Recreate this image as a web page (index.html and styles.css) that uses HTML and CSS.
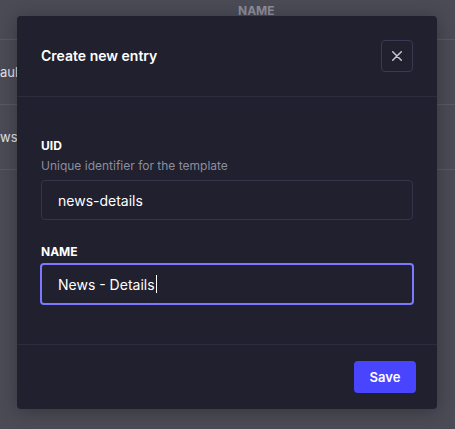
FILE: index.html
```html
<!DOCTYPE html>
<html lang="en">
<head>
<meta charset="utf-8">
<title>Create new entry</title>
<link rel="stylesheet" href="styles.css">
</head>
<body>
<div class="page">
  <div class="table">
    <div class="thead"><span class="th">NAME</span></div>
    <div class="row"><span class="cell">aul</span></div>
    <div class="row"><span class="cell cell-2">ws</span></div>
    <div class="row row-last"></div>
  </div>
</div>

<div class="modal" role="dialog" aria-labelledby="modal-title">
  <div class="modal-header">
    <h2 id="modal-title" class="modal-title">Create new entry</h2>
    <button class="close-btn" type="button" aria-label="Close">
      <svg width="10" height="10" viewBox="0 0 10 10" fill="none" aria-hidden="true">
        <path d="M0.7 0.7L9.3 9.3M9.3 0.7L0.7 9.3" stroke="#c4c4d2" stroke-width="1.5" stroke-linecap="round"/>
      </svg>
    </button>
  </div>
  <div class="modal-body">
    <div class="field">
      <label class="label" for="uid">UID</label>
      <p class="hint">Unique identifier for the template</p>
      <input id="uid" class="input" type="text" value="news-details">
    </div>
    <div class="field">
      <label class="label" for="name">NAME</label>
      <div id="name" class="input input-focus"><span>News - Details</span><span class="caret"></span></div>
    </div>
  </div>
  <div class="modal-footer">
    <button class="save-btn" type="button">Save</button>
  </div>
</div>
</body>
</html>
```
FILE: styles.css
```css
* { box-sizing: border-box; }

html, body {
  margin: 0;
  padding: 0;
}

body {
  width: 455px;
  height: 429px;
  overflow: hidden;
  background: #4b4b56;
  font-family: Inter, "Noto Sans", "Liberation Sans", sans-serif;
  position: relative;
}

.page {
  height: 100%;
}

.table {
  display: flex;
  flex-direction: column;
}

.thead {
  height: 39px;
  display: flex;
  align-items: flex-start;
  padding-left: 238px;
  padding-top: 4px;
}

.th {
  font-size: 12px;
  line-height: 14px;
  font-weight: 700;
  color: #8e8e9c;
}

.row {
  height: 65px;
  border-top: 1px solid #5a5a66;
  display: flex;
  align-items: center;
}

.row-last {
  height: 1px;
}

.cell {
  font-size: 13px;
  color: #e4e4ea;
}

.modal {
  position: absolute;
  left: 17px;
  top: 16px;
  width: 420px;
  height: 393px;
  background: #20202e;
  border-radius: 4px;
  box-shadow: 0 2px 18px rgba(0, 0, 0, 0.3);
  display: flex;
  flex-direction: column;
}

.modal-header {
  height: 81px;
  padding: 24px 24px 25px;
  display: flex;
  align-items: center;
  justify-content: space-between;
  border-bottom: 1px solid #2c2c3e;
}

.modal-title {
  margin: 0;
  font-size: 14px;
  font-weight: 600;
  color: #ffffff;
}

.close-btn {
  width: 32px;
  height: 32px;
  padding: 0;
  border: 1px solid #3a3a54;
  border-radius: 4px;
  background: transparent;
  display: flex;
  align-items: center;
  justify-content: center;
}

.modal-body {
  padding: 41px 24px 40px;
  border-bottom: 1px solid #2c2c3e;
  display: flex;
  flex-direction: column;
  gap: 24px;
}

.field {
  display: flex;
  flex-direction: column;
}

.label {
  font-size: 12px;
  font-weight: 700;
  line-height: 16px;
  color: #ffffff;
  margin-bottom: 4px;
}

.hint {
  margin: 0 0 6px;
  font-size: 12px;
  line-height: 16px;
  color: #8d8d9e;
}

.input {
  width: 372px;
  height: 40px;
  border: 1px solid #34344a;
  border-radius: 4px;
  background: transparent;
  padding: 0 16px;
  font-family: inherit;
  font-size: 14px;
  color: #ffffff;
  outline: none;
}

.input-focus {
  display: flex;
  align-items: center;
  border: 2px solid #7b79ff;
  width: 374px;
  height: 42px;
  margin: -1px 0 -1px -1px;
  padding-left: 16px;
}

.caret {
  width: 1px;
  height: 18px;
  background: #ffffff;
  margin-left: 1px;
}

.modal-footer {
  flex: 1;
  padding: 16px 21px 16px 24px;
  display: flex;
  justify-content: flex-end;
  align-items: flex-start;
}

.save-btn {
  width: 62px;
  height: 32px;
  border: none;
  border-radius: 4px;
  background: #4945ff;
  color: #ffffff;
  font-family: inherit;
  font-size: 13px;
  font-weight: 600;
  padding: 0;
}
```
